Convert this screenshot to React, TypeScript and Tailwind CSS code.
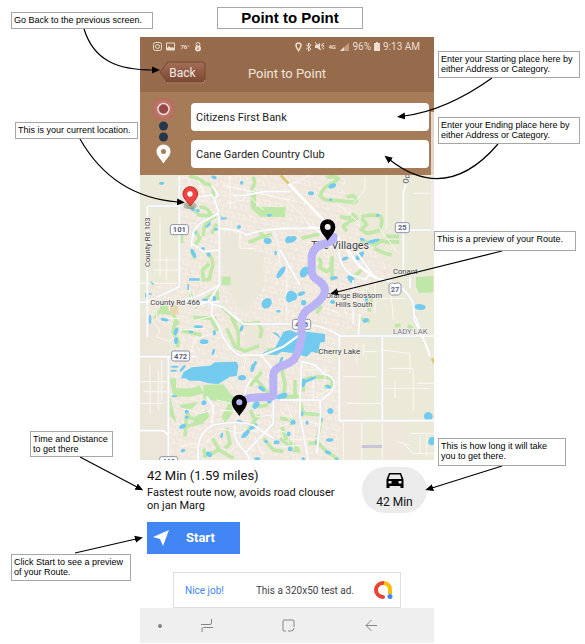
import type { ReactNode } from "react";

type Blob = [number, number, number, number, number];

const callouts: { place: string; text: ReactNode }[] = [
  { place: "left-[11px] top-[12px] w-[142px] h-[17px]", text: "Go Back to the previous screen." },
  { place: "left-[15px] top-[122px] w-[123px] h-[17px]", text: "This is your current location." },
  { place: "left-[30px] top-[431px] w-[83px] h-[26px]", text: <>Time and Distance<br />to get there</> },
  { place: "left-[11px] top-[554px] w-[120px] h-[27px]", text: <>Click Start to see a preview<br />of your Route.</> },
  { place: "left-[438px] top-[51px] w-[142px] h-[27px]", text: <>Enter your Starting place here by<br />either Address or Category.</> },
  { place: "left-[438px] top-[117px] w-[142px] h-[27px]", text: <>Enter your Ending place here by<br />either Address or Category.</> },
  { place: "left-[434px] top-[231px] w-[142px] h-[20px]", text: "This is a preview of your Route." },
  { place: "left-[438px] top-[438px] w-[128px] h-[28px]", text: <>This is how long it will take<br />you to get there.</> },
];

const arrows = [
  "M84 29C94 61 118 70 153 70",
  "M80 139C104 181 140 199 178 202",
  "M80 457L137 487",
  "M75 553L136 539",
  "M492 78C464 98 435 112 404 116",
  "M498 144C462 186 426 188 390 160",
  "M502 251L337 292",
  "M502 466L432 488",
];

// Lakes and ponds: centre x, centre y, radius x, radius y, rotation.
const ponds: Blob[] = [
  [95, 40, 8, 5, 0], [188, 118, 7, 5, 30], [204, 122, 5, 5, 0], [252, 86, 6, 5, 0], [252, 22, 8, 5, 20],
  [195, 187, 5, 5, 0], [219, 236, 6, 5, 0], [190, 250, 6, 15, -25], [236, 254, 6, 6, 0], [258, 178, 6, 4, 0],
  [327, 171, 6, 6, 0], [413, 213, 12, 9, 10], [475, 209, 9, 11, 20], [437, 249, 4, 7, 0], [453, 307, 8, 21, 35],
  [410, 400, 14, 17, 40], [418, 136, 8, 4, 0], [445, 424, 7, 4, 0], [253, 387, 5, 10, 0], [226, 390, 10, 4, 0],
  [335, 38, 5, 6, 0], [480, 380, 12, 18, 15], [543, 70, 9, 6, 0], [607, 48, 12, 7, -25], [602, 89, 5, 4, 0],
  [743, 136, 5, 5, 0], [485, 208, 16, 9, -20], [728, 214, 22, 5, -15], [697, 208, 8, 4, 20], [645, 266, 10, 5, -20],
  [663, 328, 14, 8, 50], [689, 258, 8, 18, 45], [612, 324, 12, 5, -10], [523, 306, 12, 18, 30], [870, 411, 17, 9, 5],
  [486, 378, 16, 14, 30], [514, 371, 12, 6, -20], [608, 396, 8, 6, 0], [521, 398, 8, 8, 0], [709, 385, 5, 12, 0],
  [104, 449, 12, 5, 10], [138, 484, 6, 12, 20], [60, 448, 4, 14, 0], [138, 512, 6, 10, 0], [205, 470, 14, 4, 0],
  [222, 515, 13, 7, 0], [253, 488, 5, 8, 0], [335, 475, 5, 10, 20], [183, 486, 7, 4, 0], [250, 546, 4, 10, 15],
  [158, 595, 4, 13, 40], [134, 590, 12, 3, 0], [131, 602, 10, 3, 0], [133, 679, 9, 3, 0], [368, 593, 6, 13, 15],
  [376, 580, 4, 8, 10], [336, 623, 12, 8, 0], [395, 656, 6, 12, -55], [222, 698, 8, 7, -20], [170, 725, 6, 6, 0],
  [170, 742, 6, 5, 0], [158, 769, 11, 6, -25], [378, 705, 9, 13, 35], [347, 792, 7, 17, 45], [370, 770, 14, 6, -35],
  [331, 756, 11, 5, 20], [455, 678, 18, 8, -20], [418, 694, 7, 7, 0], [440, 817, 9, 6, 0], [237, 853, 10, 7, 35],
  [159, 842, 7, 5, -20], [275, 796, 4, 9, 15], [382, 866, 9, 5, 0], [408, 814, 6, 5, 0], [454, 569, 4, 10, 25],
  [519, 639, 8, 13, 25], [542, 628, 18, 5, -25], [595, 650, 9, 5, 20], [601, 723, 9, 9, -20], [515, 731, 5, 8, 0],
  [531, 758, 5, 6, 0], [573, 748, 5, 7, 0], [489, 757, 8, 7, 0], [476, 792, 6, 7, 0], [460, 679, 12, 7, -15],
  [480, 837, 7, 7, 0], [560, 819, 5, 7, 0], [594, 847, 10, 5, 20], [599, 810, 12, 5, -5], [895, 739, 13, 13, 15],
  [906, 813, 11, 13, 20], [707, 451, 10, 6, -25], [855, 440, 5, 8, 0], [520, 866, 5, 5, 0], [620, 867, 5, 4, 0],
];

const woods = [
  "M178 18Q210 25 225 40Q252 45 250 62L250 85M170 104Q205 124 205 135L244 137Q235 110 209 112",
  "M258 138Q230 150 223 170L220 198M260 160L245 190M194 180L210 205L192 230M185 242Q190 260 197 264M230 245Q258 275 244 298L238 328L220 330L218 300L238 280",
  "M154 190L155 220M260 355L263 390M220 391L250 371M180 370L200 415M275 410L325 455",
  "M355 214Q370 215 384 205L425 193M385 180L410 210M368 20Q378 35 370 48L362 60",
  "M590 23Q610 15 626 26L602 43Q580 50 570 78Q590 96 615 91L675 97Q685 90 670 77L650 81",
  "M630 140L655 145L670 133L680 147L660 153L640 168L650 185M695 140Q725 132 752 138Q762 160 745 183L710 190L693 178L710 163L695 145",
  "M690 210L735 224L755 212L785 220M765 199L808 200M760 215L808 216M733 235L765 250L785 255",
  "M564 265Q580 275 568 292L590 305Q612 290 600 276M606 259L606 332M515 205L568 192M695 300L668 323M706 360L725 380L716 425M560 430L575 407",
  "M75 445L85 425L128 430L145 465M135 455L130 485L145 515L142 532M190 442L255 445L250 465M155 482L215 495M245 450L265 486",
  "M303 440L325 485L325 530M330 455L348 462L385 458L395 480L390 505M290 475L315 530L345 543L388 527",
  "M170 726L180 744L215 750M160 772L220 755M360 720L375 750L345 794M375 750L390 735M165 800L170 735M385 710L415 705",
  "M248 805L268 840L225 858L222 836M268 840L310 865M285 835L300 820L290 775M400 805L430 840L460 845",
  "M410 542L455 535M395 605L360 648M380 630L420 675M450 575L465 640L460 690M495 630L495 680L455 682",
  "M520 665L520 630Q560 614 608 626L605 650L582 650M515 680L475 680M510 695L520 730L575 735M575 745L560 815L590 845L625 868",
  "M450 745L490 750L480 765M450 805L488 835L510 845M535 820L560 819M455 770L470 810",
  "M795 468L812 465M833 468L850 475M690 445L720 455",
];

const mainRoads = [
  "M52 110V500M148 18V350M30 396H270M30 560H200M52 108H170",
  "M175 85L245 75Q270 110 268 180V345L235 395L190 410M268 175Q320 175 350 195Q400 175 480 176M250 90L265 75L245 45M310 77L350 75L400 65L480 65",
  "M148 350L52 395M148 395L200 380L270 345M240 400L280 412L330 455M245 400V435Q270 470 278 500Q310 550 330 556L395 555",
  "M185 230Q180 170 230 150L265 130M190 190L185 220L220 245L268 240",
  "M312 435L340 462H480M395 557L430 600V760L345 850M395 557L460 530L550 465Q595 475 630 498H912",
  "M115 560V870M30 782H100L115 795M205 870Q195 790 250 765Q320 750 370 765L430 805",
  "M230 680L250 710L246 760M315 765Q305 810 350 850L360 870M365 625L350 650L340 690",
  "M460 25L590 160L690 290L740 325Q820 335 850 400L853 450L900 550",
  "M450 175H555L590 205M820 70V320M820 70L835 15M820 180H912M820 310H850M840 320L840 355",
  "M625 240Q628 290 665 315L710 330M675 240L725 310L700 330M450 240L510 345M580 175L535 170",
  "M628 498V752H912M757 498V752M670 330V460M690 430L685 498M855 435L900 560",
  "M515 575Q560 580 580 610Q630 625 605 665L570 695L572 735L560 850M515 575L510 685V740L535 870M450 690H570",
];

const sideStreets = [
  "M90 140V320M70 270H140M70 300H150M110 260V330M30 340H140M80 420V450M170 20L210 90M205 30L230 95M170 345L195 405M290 100L340 90L360 55",
  "M280 45L480 90M300 20V120M360 80L400 120M330 180V235H375M430 180L445 225L450 275L430 290M450 245L470 270V450",
  "M480 45L540 15M465 85L520 140L540 170M620 100L690 160M670 100L705 60V20M770 15V180M850 70H912M680 165H690M745 170L800 245",
  "M605 345L635 380L650 435M580 410L625 430M710 340V430M735 340V430M780 330L790 450M690 365H725M740 385H825",
  "M65 450L90 480L80 500L115 515L140 500M100 445L150 445M150 480L230 475M200 500L180 550M190 510L280 480M260 435L200 450",
  "M155 715L210 730L250 720M270 775L310 785M150 830L200 820M225 820L260 790M310 790L390 780M375 800L400 860M300 845L345 800",
  "M340 600L350 555M260 690L350 710M270 720L330 725M380 740L430 735M450 720L490 760V835M470 700L490 755L450 770M440 780L480 790",
  "M515 750L575 765M480 810L570 805M450 830L520 825M520 600H575M550 610V690M585 590V645M540 690L605 655",
  "M680 520V575M700 545H740M640 620H740M650 700H757M700 520V560M757 655H900M757 540L840 550V610M775 595H850M795 630V685M850 600V720",
  "M695 753V870M640 753V870M757 753V870M860 640H912M840 790H912M820 820L850 850H912M870 800V850M800 815L840 825M890 790V860",
  "M30 635H110M60 580V730M85 600V720M40 665H110M30 700H100M95 570V690",
];

function Pin({ x, y }: { x: number; y: number }) {
  return (
    <path
      transform={`translate(${x} ${y})`}
      fillRule="evenodd"
      d="M0 0C-5-9-23-25-23-41A23 23 0 1 1 23-41C23-25 5-9 0 0ZM0-50A9 9 0 1 0 0-32A9 9 0 1 0 0-50Z"
    />
  );
}

function Shield({ x, y, w, label }: { x: number; y: number; w: number; label: string }) {
  return (
    <g>
      <rect x={x - w / 2} y={y - 15} width={w} height="30" rx="6" fill="#fff" stroke="#8d91a6" strokeWidth="3" />
      <text x={x} y={y + 8} textAnchor="middle" fontSize="23" fontWeight="700" fill="#5a5f78">{label}</text>
    </g>
  );
}

function RouteMap() {
  return (
    <svg viewBox="30 15 882 855" className="block w-full" role="img" aria-label="Map preview of the route" fontFamily="Roboto, 'Noto Sans', sans-serif">
      <defs>
        <pattern id="streets" width="34" height="28" patternUnits="userSpaceOnUse" patternTransform="rotate(12)">
          <path d="M0 5H24V24M10 5V18H34M24 14H34" fill="none" stroke="#f8f2ed" strokeWidth="2" />
        </pattern>
      </defs>
      <rect x="30" y="15" width="882" height="855" fill="#ebe9d8" />
      <path d="M30 435H115V870H30Z" fill="#ece5d9" />
      <path d="M150 15H480L640 18L690 190L800 310L730 350L720 440L630 498L600 560L640 640L625 870H118V560L150 500L52 430V350L148 340Z" fill="#efe7dc" />
      <path d="M150 15H480L640 18L690 190L800 310L730 350L720 440L630 498L600 560L640 640L625 870H118V560L150 500L52 430V350L148 340Z" fill="url(#streets)" />
      <path d="M275 190H325V230L400 250V350L350 430L320 410L275 330ZM345 465L410 460V540L345 545Z" fill="#ebe7d9" />
      <path d="M628 498H690V752H628ZM640 753H697V870H640ZM757 753H825V870H757Z" fill="#efe7dc" />
      <g fill="none" stroke="#bfe8a8" strokeWidth="11" strokeLinejoin="round">
        {woods.map((d) => <path key={d} d={d} />)}
      </g>
      <g fill="#bfe8a8">
        <path d="M362 60L378 65V110L465 112V142L390 140L362 115ZM275 320H302V346H275ZM450 112L466 110V140H450ZM858 321L910 318V366L868 370L858 350Z" />
        <path d="M118 625H138V655H190L208 645L222 670L180 680H130ZM220 645L280 643L302 672L325 690L300 700L220 687ZM300 690L310 725L285 760L275 740ZM90 405H115V423H90ZM118 670V735L140 760L130 720Z" />
        <path d="M148 705L205 695L185 718L155 715ZM195 740L230 720L238 742L215 760L190 758ZM475 805L510 835L490 850Z" />
      </g>
      <path d="M120 405H145V433H120Z" fill="#e3d8ae" />
      <g fill="none" stroke="#faf8f5" strokeWidth="3">
        {sideStreets.map((d) => <path key={d} d={d} />)}
      </g>
      <g fill="#72cbef">
        {ponds.map(([x, y, rx, ry, angle]) => (
          <ellipse key={`${x}-${y}`} cx={x} cy={y} rx={rx} ry={ry} transform={`rotate(${angle} ${x} ${y})`} />
        ))}
        <path d="M153 626L160 607L185 592L240 587L255 577L320 575L325 588L320 618L300 620L265 642L235 640L210 632L180 632L165 625Z" />
        <path d="M427 487L440 488L452 503L460 485L480 480L500 488L510 478L530 485L585 492V515L570 518L565 550L545 545L530 560L510 555L480 548L455 545L440 555L395 553L405 545L435 535L450 505Z" />
        <path d="M177 325H209V332H177ZM172 342H177V360H172ZM270 130L276 143L290 142V148L274 149ZM225 171L242 154V164L230 174ZM58 332L73 342L68 345ZM45 370H50V382H45ZM53 370H65V374H53Z" />
      </g>
      <g fill="none" strokeLinejoin="round">
        {mainRoads.map((d) => <path key={d} d={d} stroke="#dfe2ec" strokeWidth="7" />)}
        {mainRoads.map((d) => <path key={d} d={d} stroke="#fff" strokeWidth="5" />)}
        <path d="M477 42L590 160L690 290L740 325" stroke="#fff" strokeWidth="8" />
        <path d="M452 16L476 41M906 565L914 580" stroke="#e0c56f" strokeWidth="8" />
      </g>
      <path d="M695 825H756V834H695Z" fill="#c8c5d9" />

      <g fill="#3c3f4c" stroke="#f6f2e9" strokeWidth="4" paintOrder="stroke" fontSize="23">
        <text x="61" y="406">County Rd 466</text>
        <text transform="translate(60 291) rotate(-90)">County Rd 103</text>
        <text transform="translate(834 42) rotate(-80)">Oc</text>
        <text x="543" y="237" fontSize="32">The Villages</text>
        <text x="789" y="313">Conant</text>
        <text x="672" y="383" textAnchor="middle">Orange Blossom</text>
        <text x="672" y="412" textAnchor="middle">Hills South</text>
        <text x="565" y="551" fontSize="24">Cherry Lake</text>
        <text x="789" y="491" fill="#70758e">LADY LAK</text>
      </g>
      <Shield x={148} y={179} w={54} label="101" />
      <Shield x={817} y={173} w={42} label="25" />
      <Shield x={152} y={558} w={54} label="472" />
      <Shield x={515} y={463} w={54} label="466" />
      <Shield x={116} y={875} w={54} label="468" />
      <path d="M777 344L785 338L795 341L805 338L813 344V368L805 375H785L777 368Z" fill="#fff" stroke="#8d91a6" strokeWidth="3" />
      <text x="795" y="366" textAnchor="middle" fontSize="22" fontWeight="700" fill="#5a5f78">27</text>

      <path
        d="M611 200Q612 214 590 219Q545 230 545 265V302Q545 322 570 335Q595 356 577 382Q555 407 530 421Q512 436 515 465V500Q509 540 492 569Q475 583 450 590Q430 600 430 615V672Q430 683 415 681L365 683Q345 685 333 698"
        fill="none" stroke="#b9b2f5" strokeWidth="24" strokeLinecap="round" strokeLinejoin="round"
      />
      <ellipse cx="180" cy="107" rx="20" ry="11" fill="#7c8670" opacity=".55" />
      <path d="M181 108C176 99 159 85 159 72A22 22 0 0 1 203 72C203 85 186 99 181 108Z" fill="#ef4444" stroke="#b92a2a" strokeWidth="3" />
      <circle cx="180" cy="72" r="8" fill="#fff" />
      <Pin x={593} y={212} />
      <Pin x={328} y={738} />
    </svg>
  );
}

function StatusBar() {
  return (
    <div className="flex h-[19px] items-center justify-between pr-[14px] pl-[13px] text-[10px] text-[#ecdccf]">
      <div className="flex items-center gap-1">
        <svg width="9" height="9" viewBox="0 0 9 9" fill="none" stroke="currentColor"><rect x=".5" y=".5" width="8" height="8" rx="2" /><circle cx="4.5" cy="4.5" r="2" /></svg>
        <svg width="9" height="9" viewBox="0 0 9 9"><rect y=".5" width="9" height="8" rx="1" fill="currentColor" /><path d="M1 6L3 4L5 6L6 5L8 6V1.500H1Z" fill="#966b4c" /></svg>
        <span className="w-3 text-center text-[6px] font-bold">76°</span>
        <svg width="6" height="10" viewBox="0 0 6 10"><circle cx="3" cy="2.500" r="2" fill="none" stroke="currentColor" /><circle cx="3" cy="6.500" r="3" fill="currentColor" /><path d="M3 5.500V8" stroke="#966b4c" /></svg>
      </div>
      <div className="flex items-center gap-[3px] whitespace-nowrap">
        <svg width="7" height="10" viewBox="0 0 7 10" fill="none" stroke="currentColor" strokeWidth="1.500"><path d="M3.500 8.500C2 6 1 5 1 3.500A2.500 2.500 0 0 1 6 3.500C6 5 5 6 3.500 8.500Z" /></svg>
        <svg width="7" height="10" viewBox="0 0 7 10" fill="none" stroke="currentColor"><path d="M1 2.500L6 7L3.500 9V1L6 3L1 7.500" /></svg>
        <svg width="10" height="9" viewBox="0 0 10 9" fill="none" stroke="currentColor"><path d="M0 3H2L5 1V8L2 6H0Z" fill="currentColor" stroke="none" /><path d="M0 0L6 8M9 1L7 2.500L9 4L7 5.500L9 7M6 2.500L7 4" /></svg>
        <span className="w-[9px] text-[6px] font-bold">4G</span>
        <svg width="9" height="8" viewBox="0 0 9 8"><path d="M0 8L9 0V8Z" fill="currentColor" opacity=".45" /><path d="M0 8L4 4V8Z" fill="currentColor" /></svg>
        <span>96%</span>
        <svg width="6" height="9" viewBox="0 0 6 9" fill="currentColor"><path d="M0 1H2V0H4V1H6V9H0Z" /></svg>
        <span>9:13 AM</span>
      </div>
    </div>
  );
}

function TopBar() {
  return (
    <div className="grid grid-cols-[1fr_auto_1fr] items-center px-[19px] pt-[5px] pb-2">
      <button type="button" className="relative h-[23px] w-[47px] text-[12px] text-[#f5e9e3]">
        <svg viewBox="0 0 47 23" className="absolute inset-0" aria-hidden="true">
          <defs><linearGradient id="leather" x2="0" y2="1"><stop stopColor="#a46e56" /><stop offset="1" stopColor="#794632" /></linearGradient></defs>
          <path d="M1 11L8 2Q9 1 11 1H43Q46 1 46 4V19Q46 22 43 22H11Q9 22 8 21Z" fill="url(#leather)" stroke="#764633" />
          <path d="M8 22H43Q46 22 46 19" fill="none" stroke="#b98c72" />
        </svg>
        <span className="relative">Back</span>
      </button>
      <h2 className="pt-[2px] text-[13px] text-[#f2e4d9]">Point to Point</h2>
    </div>
  );
}

function SearchForm() {
  return (
    <form className="flex bg-[#a67c58] pt-[11px] pr-[5px] pb-[7px]">
      <svg width="51" height="64" viewBox="0 0 51 64" className="shrink-0 overflow-visible" aria-hidden="true">
        <rect x="12" y="-5" width="22" height="22" rx="7" fill="#b3705e" />
        <circle cx="23.500" cy="6" r="9" fill="#bf7569" /><circle cx="23.500" cy="6" r="5.500" fill="#934849" stroke="#f2dcd4" strokeWidth="1.500" />
        <circle cx="23.500" cy="23" r="4.500" fill="#23364c" /><circle cx="23.500" cy="34" r="4.500" fill="#23364c" />
        <path d="M23.500 60.500C21 56 16.500 53 16.500 48.500A7 7 0 0 1 30.500 48.500C30.500 53 26 56 23.500 60.500Z" fill="#fff" /><circle cx="23.500" cy="48.500" r="2.500" fill="#a67c58" />
      </svg>
      <div className="flex min-w-0 flex-1 flex-col gap-[9px]">
        <input aria-label="Starting place" defaultValue="Citizens First Bank" className="h-7 w-full rounded-[4px] bg-white px-[5px] text-[11px] text-[#222]" />
        <input aria-label="Ending place" defaultValue="Cane Garden Country Club" className="h-7 w-full rounded-[4px] bg-white px-[5px] text-[11px] text-[#222]" />
      </div>
    </form>
  );
}

function RouteSummary() {
  return (
    <section className="pt-[7px] pr-[7px] pb-[18px] pl-[7px] text-[#111]">
      <div className="flex items-start justify-between">
        <div className="pt-[1px]">
          <p className="text-[13px] leading-4">42 Min (1.59 miles)</p>
          <p className="pt-[2px] text-[11px] leading-[13px]">Fastest route now, avoids road clouser<br />on jan Marg</p>
        </div>
        <div className="flex h-[46px] w-[65px] shrink-0 flex-col items-center rounded-full bg-[#ebebeb] pt-[6px]">
          <svg width="18" height="15" viewBox="0 0 18 15" aria-hidden="true">
            <path fillRule="evenodd" d="M3 0H15L17.500 6.500V15H14.500V13H3.500V15H.5V6.500ZM4 1.500L2.500 6H15.500L14 1.500ZM2.500 8V10.500H5.500V8ZM12.500 8V10.500H15.500V8Z" />
          </svg>
          <span className="pt-[7px] text-[12px] leading-[14px]">42 Min</span>
        </div>
      </div>
      <button type="button" className="mt-[9px] flex h-8 w-[93px] items-center bg-[#4285f4] pl-[6px] text-[13px] font-bold text-white">
        <svg width="16" height="16" viewBox="0 0 16 16" fill="#fff" aria-hidden="true"><path d="M16 0L10 16L7 9L0 7Z" /></svg>
        <span className="pl-[17px]">Start</span>
      </button>
    </section>
  );
}

function AdBanner() {
  return (
    <aside className="mr-[33px] ml-[33px] flex h-9 items-center border border-[#dcdfe2] px-[11px] text-[10px] whitespace-nowrap">
      <a href="#ad" className="text-[#4285f4]">Nice job!</a>
      <span className="pl-[32px] text-[#3f4347]">This a 320x50 test ad.</span>
      <svg width="19" height="18" viewBox="0 0 19 18" className="ml-auto -mr-[4px]" fill="none" strokeWidth="4" aria-hidden="true">
        <path d="M9 2A7 7 0 0 0 9 16" stroke="#ea4335" strokeLinecap="round" /><path d="M10 2Q16 3 16 9V13" stroke="#fbbc04" /><circle cx="16" cy="15.500" r="2.500" fill="#4285f4" />
      </svg>
    </aside>
  );
}

function NavigationKeys() {
  return (
    <nav className="flex h-[35px] items-center bg-[#efefef] pl-[18px] text-[#858585]">
      <span className="h-1 w-1 rounded-full bg-current" />
      <button type="button" aria-label="Recent apps" className="ml-[39px]">
        <svg width="12" height="13" viewBox="0 0 12 13" fill="none" stroke="currentColor" className="block"><path d="M0 5.500H9Q10.500 5.500 10.500 4V0M12 8.500H2.500Q1 8.500 1 10V13" /></svg>
      </button>
      <button type="button" aria-label="Home" className="ml-[69px]">
        <svg width="13" height="13" viewBox="0 0 13 13" fill="none" stroke="currentColor" className="block"><path d="M4 12H2Q1 12 1 11V2Q1 1 2 1H11Q12 1 12 2V8M6 12H9Q12 12 12 9" /></svg>
      </button>
      <button type="button" aria-label="Back" className="ml-[70px]">
        <svg width="12" height="13" viewBox="0 0 12 13" fill="none" stroke="currentColor" className="block"><path d="M6.500 1L1 6.500L6.500 12M1 6.500H12" /></svg>
      </button>
    </nav>
  );
}

export default function App() {
  return (
    <main className="relative w-full bg-white pt-[7px] pb-[2px] font-['Liberation_Sans',Arial,sans-serif] text-black">
      <div className="grid grid-cols-[140px_minmax(0,294px)_1fr]">
        <h1 className="col-start-2 mb-2 ml-[77px] flex h-[22px] w-[146px] items-center justify-center border border-[#a6a6a6] text-[15px] font-bold">Point to Point</h1>
        <article className="col-start-2 font-[Roboto,sans-serif]">
          <header className="bg-[#966b4c]">
            <StatusBar />
            <TopBar />
          </header>
          <SearchForm />
          <RouteMap />
          <RouteSummary />
          <AdBanner />
          <NavigationKeys />
        </article>
      </div>
      <svg width="585" height="644" className="pointer-events-none absolute top-0 left-0" aria-hidden="true">
        <defs>
          <marker id="head" markerUnits="userSpaceOnUse" markerWidth="9" markerHeight="8" refX="1" refY="4" orient="auto"><path d="M0 0.500L8 4L0 7.500Z" /></marker>
        </defs>
        <path d="M431 112H434V231H431Z" fill="#f3eaea" opacity=".8" />
        <g fill="none" stroke="#000" strokeWidth="1.200">
          {arrows.map((d) => <path key={d} d={d} markerEnd="url(#head)" />)}
        </g>
      </svg>
      {callouts.map(({ place, text }) => (
        <p key={place} className={`absolute border border-[#a6a6a6] bg-white px-[2px] pt-[2px] text-[9px] leading-[10px] whitespace-nowrap ${place}`}>{text}</p>
      ))}
    </main>
  );
}
